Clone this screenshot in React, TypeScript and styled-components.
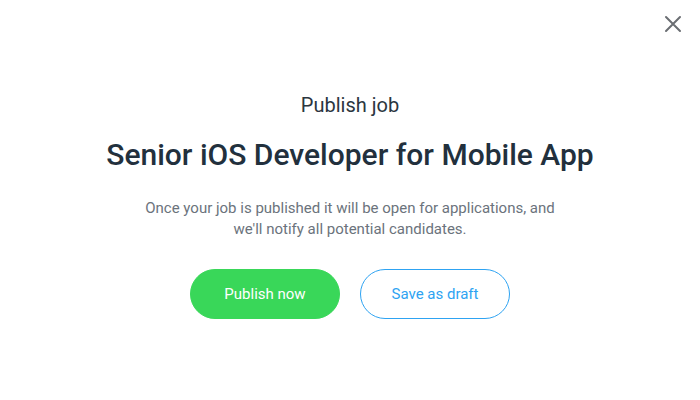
import React, {FunctionComponent} from 'react';
import styled, {createGlobalStyle} from 'styled-components';

const GlobalStyle = createGlobalStyle`
  body {
    margin: 0;
    background: #fff;
    font-family: Roboto, "Liberation Sans", sans-serif;
  }
`;

const Dialog = styled.div`
  position: relative;
  width: 700px;
  height: 400px;
  display: flex;
  flex-direction: column;
  align-items: center;
  padding-top: 92px;
  box-sizing: border-box;
`;

const Close = styled.button`
  position: absolute;
  top: 14px;
  right: 17px;
  width: 20px;
  height: 20px;
  padding: 0;
  border: none;
  background: none;
  cursor: pointer;
  outline: none;
`;

const Eyebrow = styled.div`
  font-size: 20px;
  line-height: 26px;
  color: #2b3640;
`;

const Title = styled.h1`
  margin: 19px 0 0;
  font-size: 30px;
  line-height: 36px;
  font-weight: 500;
  color: #22303d;
`;

const Text = styled.p`
  margin: 25px 0 0;
  width: 430px;
  text-align: center;
  font-size: 15px;
  line-height: 21px;
  color: #6b737c;
`;

const Actions = styled.div`
  display: flex;
  gap: 20px;
  margin-top: 29px;
`;

const Button = styled.button<{primary?: boolean}>`
  width: 150px;
  height: 50px;
  border-radius: 25px;
  font-family: inherit;
  font-size: 15px;
  cursor: pointer;
  box-sizing: border-box;
  border: 1px solid ${p => p.primary ? '#39d759' : '#2ea3f2'};
  background: ${p => p.primary ? '#39d759' : '#fff'};
  color: ${p => p.primary ? '#fff' : '#2ea3f2'};
`;

const PublishJob: FunctionComponent = () => (
  <>
    <GlobalStyle/>
    <Dialog>
      <Close aria-label="Close">
        <svg width="20" height="20" viewBox="0 0 20 20">
          <path d="M3 3 L17 17 M17 3 L3 17" stroke="#6b6e73" strokeWidth="2" strokeLinecap="round"/>
        </svg>
      </Close>
      <Eyebrow>Publish job</Eyebrow>
      <Title>Senior iOS Developer for Mobile App</Title>
      <Text>
        Once your job is published it will be open for applications, and
        we'll notify all potential candidates.
      </Text>
      <Actions>
        <Button primary>Publish now</Button>
        <Button>Save as draft</Button>
      </Actions>
    </Dialog>
  </>
);

export default PublishJob;
